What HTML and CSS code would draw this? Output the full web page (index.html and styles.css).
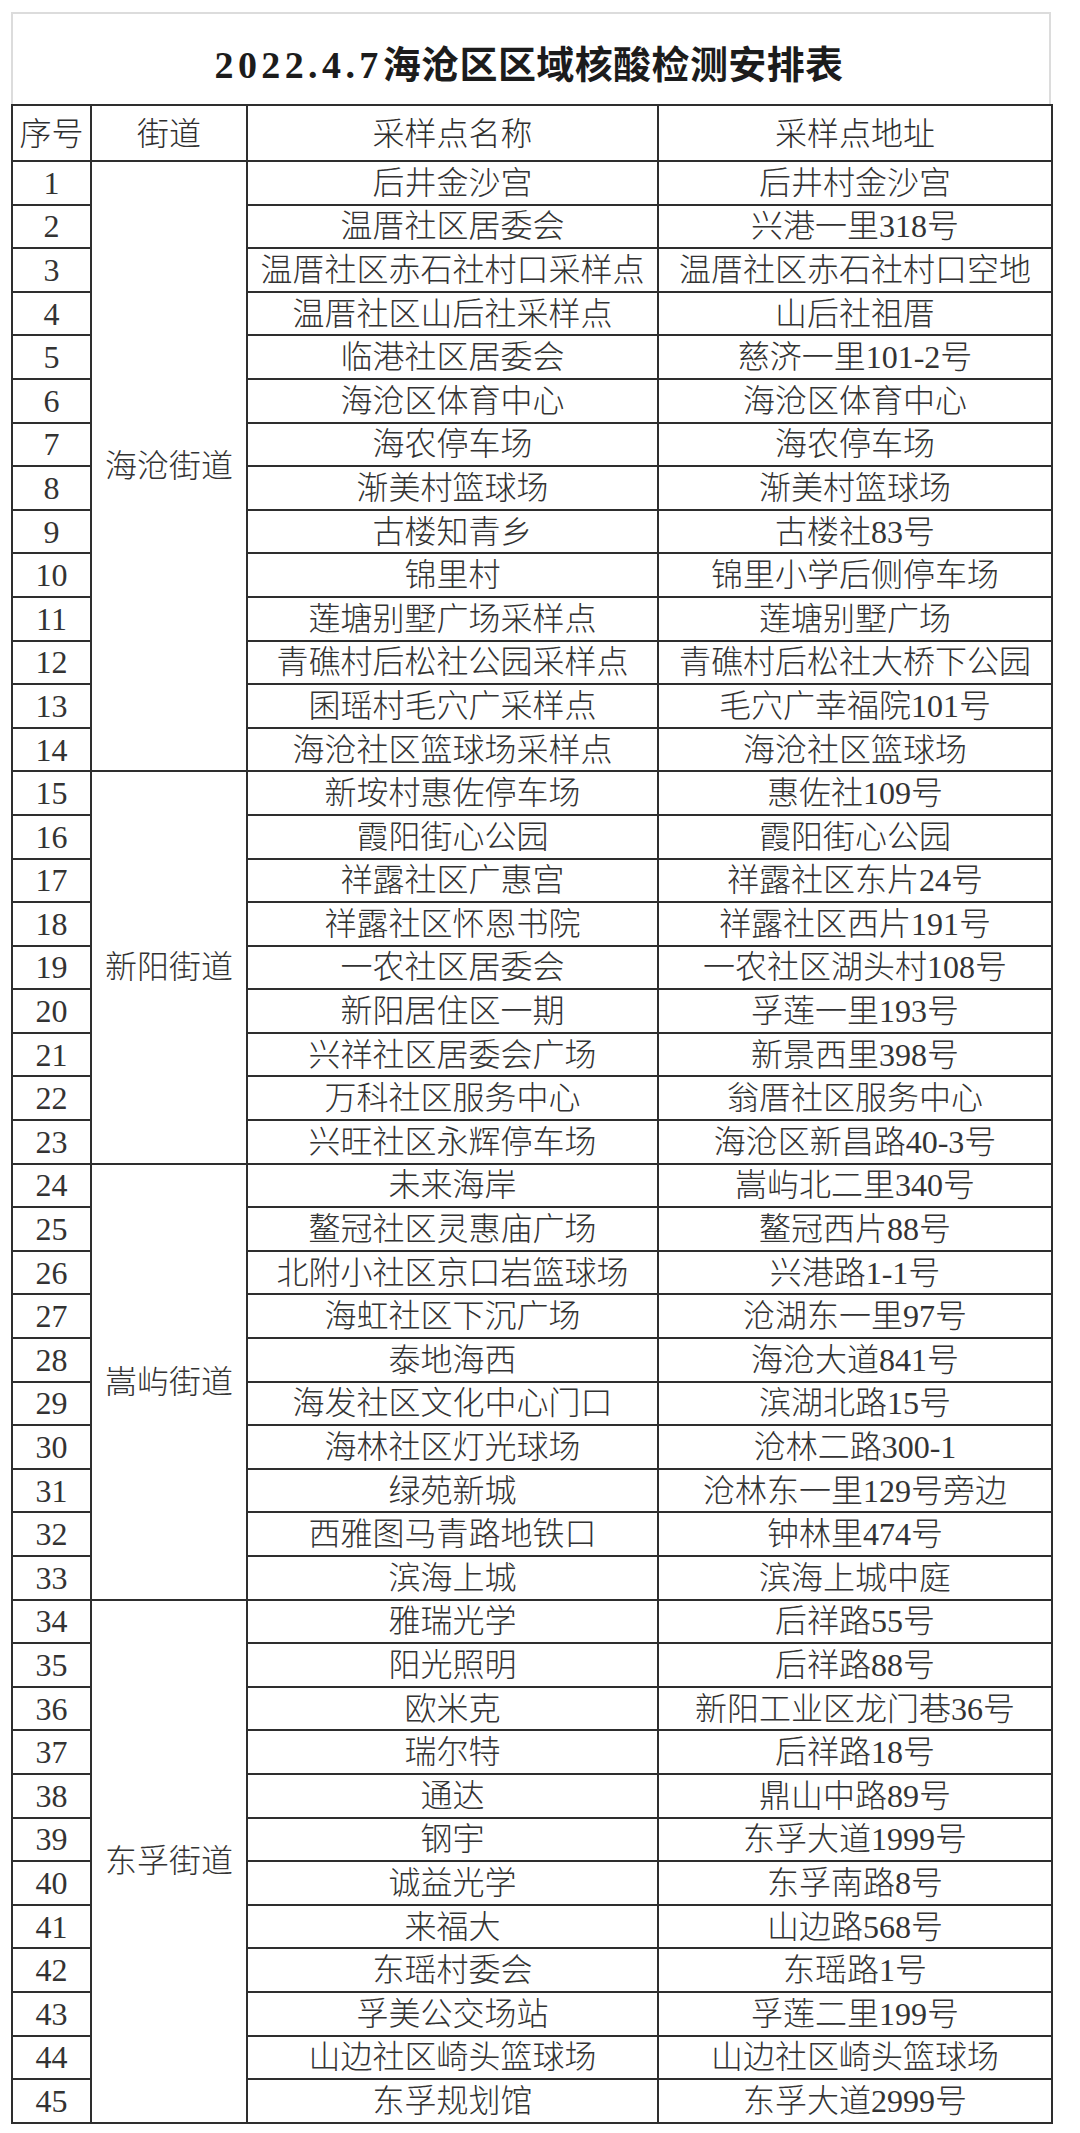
FILE: index.html
```html
<!DOCTYPE html>
<html lang="zh-CN">
<head>
<meta charset="utf-8">
<title>2022.4.7海沧区区域核酸检测安排表</title>
<link rel="stylesheet" href="styles.css">
</head>
<body>
<div class="sheet">
  <div class="title-box">
    <h1 class="title"><span class="num">2022.4.7</span>海沧区区域核酸检测安排表</h1>
  </div>
  <table class="grid">
    <colgroup>
      <col class="c-no"><col class="c-street"><col class="c-name"><col class="c-addr">
    </colgroup>
    <thead>
      <tr class="head"><th>序号</th><th>街道</th><th>采样点名称</th><th>采样点地址</th></tr>
    </thead>
    <tbody>
      <tr><td>1</td><td class="street" rowspan="14">海沧街道</td><td>后井金沙宫</td><td>后井村金沙宫</td></tr>
      <tr><td>2</td><td>温厝社区居委会</td><td>兴港一里318号</td></tr>
      <tr><td>3</td><td>温厝社区赤石社村口采样点</td><td>温厝社区赤石社村口空地</td></tr>
      <tr><td>4</td><td>温厝社区山后社采样点</td><td>山后社祖厝</td></tr>
      <tr><td>5</td><td>临港社区居委会</td><td>慈济一里101-2号</td></tr>
      <tr><td>6</td><td>海沧区体育中心</td><td>海沧区体育中心</td></tr>
      <tr><td>7</td><td>海农停车场</td><td>海农停车场</td></tr>
      <tr><td>8</td><td>渐美村篮球场</td><td>渐美村篮球场</td></tr>
      <tr><td>9</td><td>古楼知青乡</td><td>古楼社83号</td></tr>
      <tr><td>10</td><td>锦里村</td><td>锦里小学后侧停车场</td></tr>
      <tr><td>11</td><td>莲塘别墅广场采样点</td><td>莲塘别墅广场</td></tr>
      <tr><td>12</td><td>青礁村后松社公园采样点</td><td>青礁村后松社大桥下公园</td></tr>
      <tr><td>13</td><td>囷瑶村毛穴广采样点</td><td>毛穴广幸福院101号</td></tr>
      <tr><td>14</td><td>海沧社区篮球场采样点</td><td>海沧社区篮球场</td></tr>
      <tr><td>15</td><td class="street" rowspan="9">新阳街道</td><td>新垵村惠佐停车场</td><td>惠佐社109号</td></tr>
      <tr><td>16</td><td>霞阳街心公园</td><td>霞阳街心公园</td></tr>
      <tr><td>17</td><td>祥露社区广惠宫</td><td>祥露社区东片24号</td></tr>
      <tr><td>18</td><td>祥露社区怀恩书院</td><td>祥露社区西片191号</td></tr>
      <tr><td>19</td><td>一农社区居委会</td><td>一农社区湖头村108号</td></tr>
      <tr><td>20</td><td>新阳居住区一期</td><td>孚莲一里193号</td></tr>
      <tr><td>21</td><td>兴祥社区居委会广场</td><td>新景西里398号</td></tr>
      <tr><td>22</td><td>万科社区服务中心</td><td>翁厝社区服务中心</td></tr>
      <tr><td>23</td><td>兴旺社区永辉停车场</td><td>海沧区新昌路40-3号</td></tr>
      <tr><td>24</td><td class="street" rowspan="10">嵩屿街道</td><td>未来海岸</td><td>嵩屿北二里340号</td></tr>
      <tr><td>25</td><td>鳌冠社区灵惠庙广场</td><td>鳌冠西片88号</td></tr>
      <tr><td>26</td><td>北附小社区京口岩篮球场</td><td>兴港路1-1号</td></tr>
      <tr><td>27</td><td>海虹社区下沉广场</td><td>沧湖东一里97号</td></tr>
      <tr><td>28</td><td>泰地海西</td><td>海沧大道841号</td></tr>
      <tr><td>29</td><td>海发社区文化中心门口</td><td>滨湖北路15号</td></tr>
      <tr><td>30</td><td>海林社区灯光球场</td><td>沧林二路300-1</td></tr>
      <tr><td>31</td><td>绿苑新城</td><td>沧林东一里129号旁边</td></tr>
      <tr><td>32</td><td>西雅图马青路地铁口</td><td>钟林里474号</td></tr>
      <tr><td>33</td><td>滨海上城</td><td>滨海上城中庭</td></tr>
      <tr><td>34</td><td class="street" rowspan="12">东孚街道</td><td>雅瑞光学</td><td>后祥路55号</td></tr>
      <tr><td>35</td><td>阳光照明</td><td>后祥路88号</td></tr>
      <tr><td>36</td><td>欧米克</td><td>新阳工业区龙门巷36号</td></tr>
      <tr><td>37</td><td>瑞尔特</td><td>后祥路18号</td></tr>
      <tr><td>38</td><td>通达</td><td>鼎山中路89号</td></tr>
      <tr><td>39</td><td>钢宇</td><td>东孚大道1999号</td></tr>
      <tr><td>40</td><td>诚益光学</td><td>东孚南路8号</td></tr>
      <tr><td>41</td><td>来福大</td><td>山边路568号</td></tr>
      <tr><td>42</td><td>东瑶村委会</td><td>东瑶路1号</td></tr>
      <tr><td>43</td><td>孚美公交场站</td><td>孚莲二里199号</td></tr>
      <tr><td>44</td><td>山边社区崎头篮球场</td><td>山边社区崎头篮球场</td></tr>
      <tr><td>45</td><td>东孚规划馆</td><td>东孚大道2999号</td></tr>
    </tbody>
  </table>
</div>
</body>
</html>
```
FILE: styles.css
```css
html, body {
  margin: 0;
  padding: 0;
  background: #ffffff;
}

body {
  font-family: "Liberation Serif", "Noto Sans CJK SC", serif;
  color: #333333;
}

.sheet {
  width: 1040px;
  margin: 12px 0 0 11px;
}

.title-box {
  height: 92px;
  border: 2px solid #dcdcdc;
  border-bottom: none;
  box-sizing: border-box;
  display: flex;
  align-items: center;
  justify-content: center;
  padding-top: 12px;
}

.title {
  margin: 0;
  font-size: 38px;
  font-weight: 700;
  color: #1c1c1c;
  line-height: 1;
  letter-spacing: 0.4px;
  padding-right: 4px;
}

.title .num {
  letter-spacing: 4.4px;
}

.grid {
  width: 1040px;
  border-collapse: collapse;
  table-layout: fixed;
  border: 2px solid #262626;
}

.c-no { width: 79px; }
.c-street { width: 156px; }
.c-name { width: 411px; }
.c-addr { width: 394px; }

.grid th,
.grid td {
  border: 2px solid #2e2e2e;
  padding: 0;
  text-align: center;
  vertical-align: middle;
  font-size: 32px;
  font-weight: 300;
  line-height: 1;
  white-space: nowrap;
  overflow: hidden;
}

.grid tr.head {
  height: 56px;
}

.grid tbody tr {
  height: 43.6px;
}

.grid th {
  padding-top: 2px;
  color: #2e2e2e;
}
```
